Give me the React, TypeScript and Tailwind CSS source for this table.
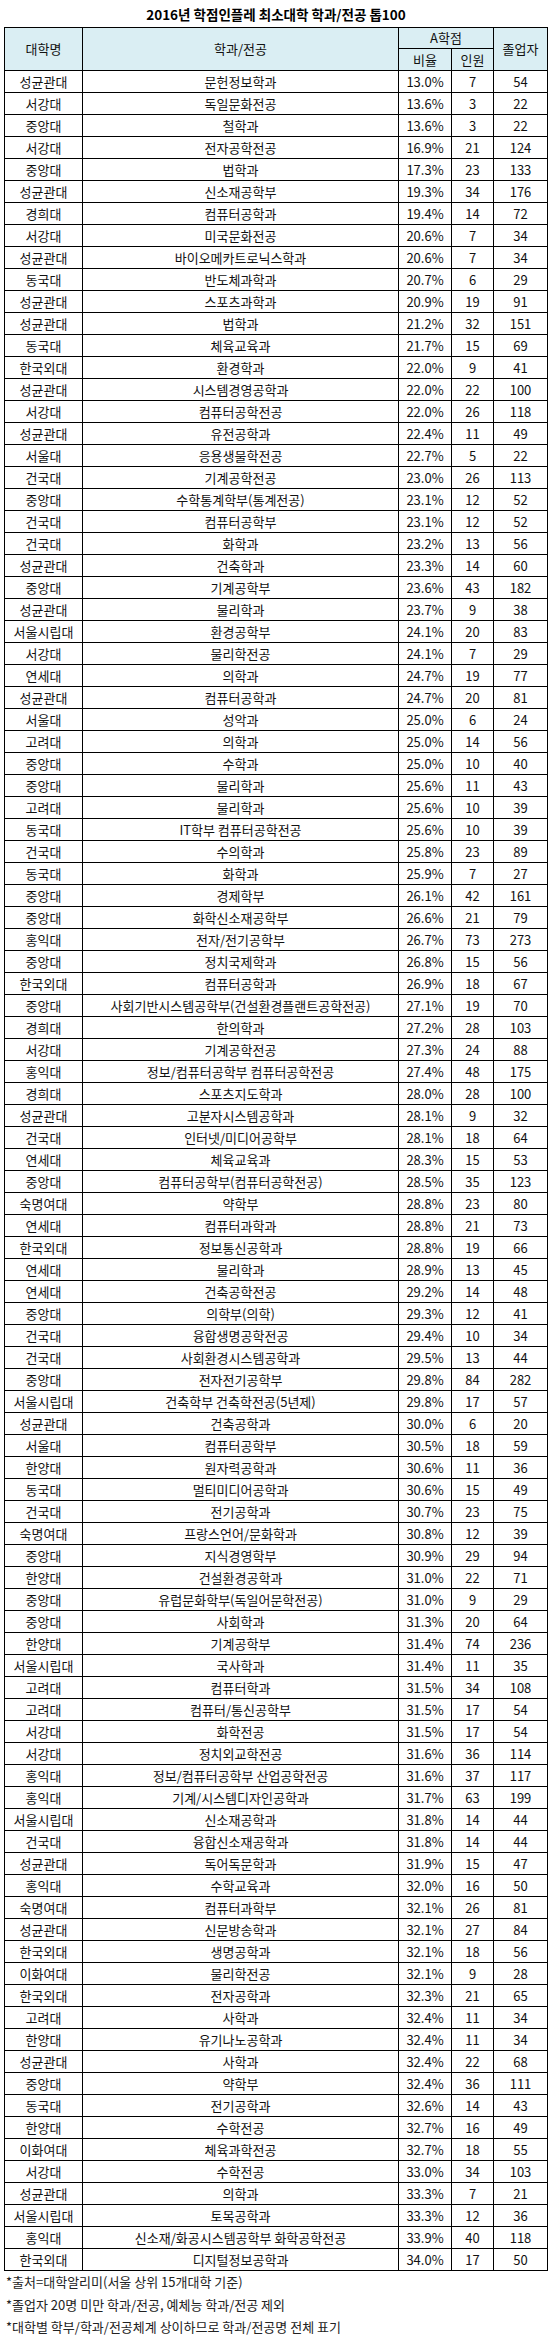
import React from "react";

type Row = [string, string, string, number, number];

const rows: Row[] = [
  ["성균관대", "문헌정보학과", "13.0%", 7, 54],
  ["서강대", "독일문화전공", "13.6%", 3, 22],
  ["중앙대", "철학과", "13.6%", 3, 22],
  ["서강대", "전자공학전공", "16.9%", 21, 124],
  ["중앙대", "법학과", "17.3%", 23, 133],
  ["성균관대", "신소재공학부", "19.3%", 34, 176],
  ["경희대", "컴퓨터공학과", "19.4%", 14, 72],
  ["서강대", "미국문화전공", "20.6%", 7, 34],
  ["성균관대", "바이오메카트로닉스학과", "20.6%", 7, 34],
  ["동국대", "반도체과학과", "20.7%", 6, 29],
  ["성균관대", "스포츠과학과", "20.9%", 19, 91],
  ["성균관대", "법학과", "21.2%", 32, 151],
  ["동국대", "체육교육과", "21.7%", 15, 69],
  ["한국외대", "환경학과", "22.0%", 9, 41],
  ["성균관대", "시스템경영공학과", "22.0%", 22, 100],
  ["서강대", "컴퓨터공학전공", "22.0%", 26, 118],
  ["성균관대", "유전공학과", "22.4%", 11, 49],
  ["서울대", "응용생물학전공", "22.7%", 5, 22],
  ["건국대", "기계공학전공", "23.0%", 26, 113],
  ["중앙대", "수학통계학부(통계전공)", "23.1%", 12, 52],
  ["건국대", "컴퓨터공학부", "23.1%", 12, 52],
  ["건국대", "화학과", "23.2%", 13, 56],
  ["성균관대", "건축학과", "23.3%", 14, 60],
  ["중앙대", "기계공학부", "23.6%", 43, 182],
  ["성균관대", "물리학과", "23.7%", 9, 38],
  ["서울시립대", "환경공학부", "24.1%", 20, 83],
  ["서강대", "물리학전공", "24.1%", 7, 29],
  ["연세대", "의학과", "24.7%", 19, 77],
  ["성균관대", "컴퓨터공학과", "24.7%", 20, 81],
  ["서울대", "성악과", "25.0%", 6, 24],
  ["고려대", "의학과", "25.0%", 14, 56],
  ["중앙대", "수학과", "25.0%", 10, 40],
  ["중앙대", "물리학과", "25.6%", 11, 43],
  ["고려대", "물리학과", "25.6%", 10, 39],
  ["동국대", "IT학부 컴퓨터공학전공", "25.6%", 10, 39],
  ["건국대", "수의학과", "25.8%", 23, 89],
  ["동국대", "화학과", "25.9%", 7, 27],
  ["중앙대", "경제학부", "26.1%", 42, 161],
  ["중앙대", "화학신소재공학부", "26.6%", 21, 79],
  ["홍익대", "전자/전기공학부", "26.7%", 73, 273],
  ["중앙대", "정치국제학과", "26.8%", 15, 56],
  ["한국외대", "컴퓨터공학과", "26.9%", 18, 67],
  ["중앙대", "사회기반시스템공학부(건설환경플랜트공학전공)", "27.1%", 19, 70],
  ["경희대", "한의학과", "27.2%", 28, 103],
  ["서강대", "기계공학전공", "27.3%", 24, 88],
  ["홍익대", "정보/컴퓨터공학부 컴퓨터공학전공", "27.4%", 48, 175],
  ["경희대", "스포츠지도학과", "28.0%", 28, 100],
  ["성균관대", "고분자시스템공학과", "28.1%", 9, 32],
  ["건국대", "인터넷/미디어공학부", "28.1%", 18, 64],
  ["연세대", "체육교육과", "28.3%", 15, 53],
  ["중앙대", "컴퓨터공학부(컴퓨터공학전공)", "28.5%", 35, 123],
  ["숙명여대", "약학부", "28.8%", 23, 80],
  ["연세대", "컴퓨터과학과", "28.8%", 21, 73],
  ["한국외대", "정보통신공학과", "28.8%", 19, 66],
  ["연세대", "물리학과", "28.9%", 13, 45],
  ["연세대", "건축공학전공", "29.2%", 14, 48],
  ["중앙대", "의학부(의학)", "29.3%", 12, 41],
  ["건국대", "융합생명공학전공", "29.4%", 10, 34],
  ["건국대", "사회환경시스템공학과", "29.5%", 13, 44],
  ["중앙대", "전자전기공학부", "29.8%", 84, 282],
  ["서울시립대", "건축학부 건축학전공(5년제)", "29.8%", 17, 57],
  ["성균관대", "건축공학과", "30.0%", 6, 20],
  ["서울대", "컴퓨터공학부", "30.5%", 18, 59],
  ["한양대", "원자력공학과", "30.6%", 11, 36],
  ["동국대", "멀티미디어공학과", "30.6%", 15, 49],
  ["건국대", "전기공학과", "30.7%", 23, 75],
  ["숙명여대", "프랑스언어/문화학과", "30.8%", 12, 39],
  ["중앙대", "지식경영학부", "30.9%", 29, 94],
  ["한양대", "건설환경공학과", "31.0%", 22, 71],
  ["중앙대", "유럽문화학부(독일어문학전공)", "31.0%", 9, 29],
  ["중앙대", "사회학과", "31.3%", 20, 64],
  ["한양대", "기계공학부", "31.4%", 74, 236],
  ["서울시립대", "국사학과", "31.4%", 11, 35],
  ["고려대", "컴퓨터학과", "31.5%", 34, 108],
  ["고려대", "컴퓨터/통신공학부", "31.5%", 17, 54],
  ["서강대", "화학전공", "31.5%", 17, 54],
  ["서강대", "정치외교학전공", "31.6%", 36, 114],
  ["홍익대", "정보/컴퓨터공학부 산업공학전공", "31.6%", 37, 117],
  ["홍익대", "기계/시스템디자인공학과", "31.7%", 63, 199],
  ["서울시립대", "신소재공학과", "31.8%", 14, 44],
  ["건국대", "융합신소재공학과", "31.8%", 14, 44],
  ["성균관대", "독어독문학과", "31.9%", 15, 47],
  ["홍익대", "수학교육과", "32.0%", 16, 50],
  ["숙명여대", "컴퓨터과학부", "32.1%", 26, 81],
  ["성균관대", "신문방송학과", "32.1%", 27, 84],
  ["한국외대", "생명공학과", "32.1%", 18, 56],
  ["이화여대", "물리학전공", "32.1%", 9, 28],
  ["한국외대", "전자공학과", "32.3%", 21, 65],
  ["고려대", "사학과", "32.4%", 11, 34],
  ["한양대", "유기나노공학과", "32.4%", 11, 34],
  ["성균관대", "사학과", "32.4%", 22, 68],
  ["중앙대", "약학부", "32.4%", 36, 111],
  ["동국대", "전기공학과", "32.6%", 14, 43],
  ["한양대", "수학전공", "32.7%", 16, 49],
  ["이화여대", "체육과학전공", "32.7%", 18, 55],
  ["서강대", "수학전공", "33.0%", 34, 103],
  ["성균관대", "의학과", "33.3%", 7, 21],
  ["서울시립대", "토목공학과", "33.3%", 12, 36],
  ["홍익대", "신소재/화공시스템공학부 화학공학전공", "33.9%", 40, 118],
  ["한국외대", "디지털정보공학과", "34.0%", 17, 50],
];

const cell = "flex items-center justify-center border-r border-b border-black whitespace-nowrap";

export default function App() {
  return (
    <div className="w-[550px] bg-white pl-[4px] text-[13px] text-[#111] font-['Noto_Sans_CJK_KR',sans-serif]">
      <div className="w-[544px] h-[27px] flex items-center justify-center pt-[2px] text-[13.5px] font-bold text-black">
        2016년 학점인플레 최소대학 학과/전공 톱100
      </div>
      <div className="w-[544px] border-l border-t border-black">
        <div className="grid grid-cols-[78px_316px_53px_42px_54px] grid-rows-[21px_22px] bg-[#daeef3]">
          <div className={`${cell} row-span-2`}>대학명</div>
          <div className={`${cell} row-span-2`}>학과/전공</div>
          <div className={`${cell} col-span-2`}>A학점</div>
          <div className={`${cell} row-span-2`}>졸업자</div>
          <div className={cell}>비율</div>
          <div className={cell}>인원</div>
        </div>
        {rows.map((r, i) => (
          <div key={i} className="grid grid-cols-[78px_316px_53px_42px_54px] h-[22px]">
            <div className={cell}>{r[0]}</div>
            <div className={cell}>{r[1]}</div>
            <div className={cell}>{r[2]}</div>
            <div className={cell}>{r[3]}</div>
            <div className={cell}>{r[4]}</div>
          </div>
        ))}
      </div>
      <div className="pl-[2px] leading-[22.5px] text-[#222]">
        <div>*출처=대학알리미(서울 상위 15개대학 기준)</div>
        <div>*졸업자 20명 미만 학과/전공, 예체능 학과/전공 제외</div>
        <div>*대학별 학부/학과/전공체계 상이하므로 학과/전공명 전체 표기</div>
      </div>
    </div>
  );
}
